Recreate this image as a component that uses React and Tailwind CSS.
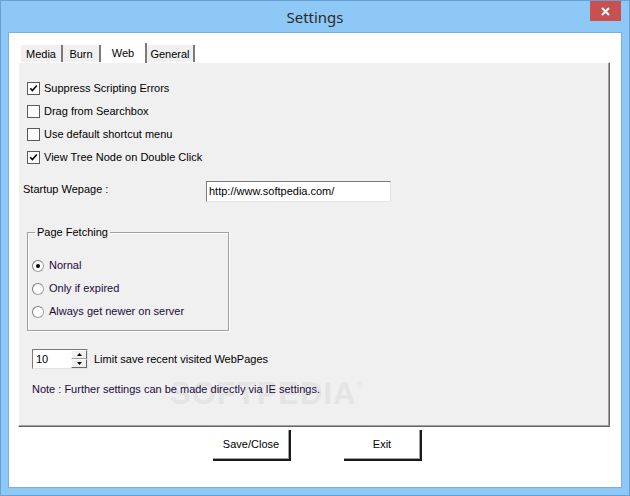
import React from 'react';

const font = { fontFamily: '"Liberation Sans", Arial, sans-serif' };

function Check({ checked, label }) {
  return (
    <div className="flex items-center h-[23px]">
      <div className="w-[13px] h-[13px] bg-white border border-[#5a5a5a] flex items-center justify-center">
        {checked && (
          <svg width="9" height="9" viewBox="0 0 9 9">
            <path d="M1.2 4.2 L3.4 6.6 L7.8 1.6" fill="none" stroke="#000" strokeWidth="1.5" />
          </svg>
        )}
      </div>
      <span className="ml-[4px] text-[11px] text-black leading-[13px]">{label}</span>
    </div>
  );
}

function Radio({ checked, label }) {
  return (
    <div className="flex items-center h-[23px]">
      <div className="w-[12px] h-[12px] rounded-full bg-white border border-[#a0a0a0] border-t-[#7a7a7a] border-l-[#7a7a7a] flex items-center justify-center">
        {checked && <div className="w-[4px] h-[4px] rounded-full bg-black" />}
      </div>
      <span className="ml-[5px] text-[11px] text-[#1a0a3a] leading-[13px]">{label}</span>
    </div>
  );
}

function Tab({ label, selected, w }) {
  if (selected) {
    return (
      <div className={`${w} h-[20px] mb-[-1px] relative z-10 bg-white border-r-2 border-r-[#7a7a7a] flex items-start justify-center pt-[2px] text-[11px] text-black`}>
        {label}
      </div>
    );
  }
  return (
    <div className={`${w} h-[17px] bg-[#f0f0f0] border-r-2 border-r-[#7a7a7a] flex items-center justify-center pt-[2px] text-[11px] text-black`}>
      {label}
    </div>
  );
}

function Button({ label }) {
  return (
    <div className="w-[78px] h-[31px] bg-white border-r-2 border-b-2 border-r-[#1a1a1a] border-b-[#1a1a1a] shadow-[inset_-1px_-1px_0_#a0a0a0] flex items-center justify-center text-[11px] text-black">
      {label}
    </div>
  );
}

export default function App() {
  return (
    <div className="w-[630px] h-[496px] bg-[#8ec8f7] border border-[#6a9fd6] flex flex-col" style={font}>
      <div className="h-[31px] relative flex items-center justify-center">
        <span className="text-[15px] text-[#2b2b2b] mt-[2px]" style={{ fontFamily: '"Noto Sans", "Open Sans", sans-serif' }}>Settings</span>
        <div className="absolute right-[8px] top-0 w-[31px] h-[20px] bg-[#c75050] flex items-center justify-center">
          <svg width="9" height="9" viewBox="0 0 9 9">
            <path d="M1 1 L8 8 M8 1 L1 8" stroke="#fff" strokeWidth="2" />
          </svg>
        </div>
      </div>

      <div className="mx-[7px] h-[456px] bg-white border border-[#79aee6] pt-[10px] pl-[9px]">
        <div className="flex items-end h-[19px] pl-[3px]">
          <Tab label="Media" w="w-[42px]" />
          <Tab label="Burn" w="w-[38px]" />
          <Tab label="Web" w="w-[46px]" selected />
          <Tab label="General" w="w-[48px]" />
        </div>

        <div className="w-[592px] h-[365px] bg-[#f0f0f0] border-l border-t border-white border-r border-b border-r-[#696969] border-b-[#696969] shadow-[inset_-1px_-1px_0_#a0a0a0] relative">
          <div className="absolute left-[151px] top-[308px] text-[31px] font-bold tracking-[1px] text-[#e4e4e4] select-none pointer-events-none">
            SOFTPEDIA<sup className="text-[9px] font-normal align-super">®</sup>
          </div>

          <div className="relative pt-[14px] pl-[8px]">
            <Check checked label="Suppress Scripting Errors" />
            <Check label="Drag from Searchbox" />
            <Check label="Use default shortcut menu" />
            <Check checked label="View Tree Node on Double Click" />
          </div>

          <div className="relative flex items-start mt-[12px] pl-[4px]">
            <span className="w-[183px] text-[11px] text-black leading-[13px] pt-[2px]">Startup Wepage :</span>
            <div className="w-[185px] h-[21px] bg-white border border-t-[#7a7a7a] border-l-[#7a7a7a] border-r-[#e3e3e3] border-b-[#e3e3e3] flex items-center pl-[2px] text-[11px] text-black">
              http://www.softpedia.com/
            </div>
          </div>

          <div className="relative ml-[8px] mt-[30px] w-[202px] h-[99px] border border-[#a0a0a0] shadow-[inset_1px_1px_0_#fff,1px_1px_0_#fff]">
            <span className="absolute left-[7px] top-[-8px] px-[2px] bg-[#f0f0f0] text-[11px] text-black leading-[14px]">Page Fetching</span>
            <div className="pt-[21px] pl-[4px]">
              <Radio checked label="Nornal" />
              <Radio label="Only if expired" />
              <Radio label="Always get newer on server" />
            </div>
          </div>

          <div className="relative flex items-center mt-[18px] ml-[13px]">
            <div className="w-[56px] h-[20px] bg-white border border-t-[#7a7a7a] border-l-[#7a7a7a] border-r-[#e3e3e3] border-b-[#e3e3e3] flex">
              <span className="flex-1 pl-[3px] text-[11px] text-black leading-[18px]">10</span>
              <div className="w-[16px] flex flex-col">
                <div className="flex-1 bg-[#f0f0f0] border border-t-white border-l-white border-r-[#696969] border-b-[#a0a0a0] flex items-center justify-center">
                  <svg width="5" height="3" viewBox="0 0 5 3"><path d="M2.5 0 L5 3 L0 3 Z" fill="#000" /></svg>
                </div>
                <div className="flex-1 bg-[#f0f0f0] border border-t-white border-l-white border-r-[#696969] border-b-[#696969] flex items-center justify-center">
                  <svg width="5" height="3" viewBox="0 0 5 3"><path d="M0 0 L5 0 L2.5 3 Z" fill="#000" /></svg>
                </div>
              </div>
            </div>
            <span className="ml-[6px] text-[11px] text-black leading-[13px]">Limit save recent visited WebPages</span>
          </div>

          <div className="relative mt-[13px] ml-[13px] text-[11px] text-[#1a0a3a] leading-[14px]">
            Note : Further settings can be made directly via IE settings.
          </div>
        </div>

        <div className="flex mt-[3px] ml-[195px] gap-[53px]">
          <Button label="Save/Close" />
          <Button label="Exit" />
        </div>
      </div>
    </div>
  );
}
